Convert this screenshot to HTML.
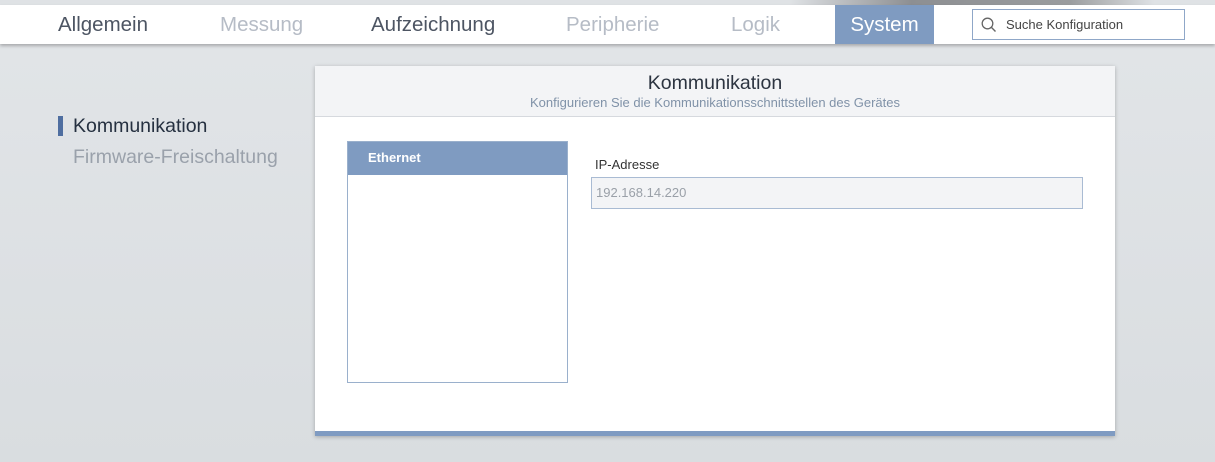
<!DOCTYPE html>
<html><head><meta charset="utf-8"><style>
*{margin:0;padding:0;box-sizing:border-box}
body{width:1215px;height:462px;overflow:hidden;background:linear-gradient(#e2e5e8,#d9dde0);font-family:"Liberation Sans",sans-serif;position:relative}
.top{position:absolute;left:0;top:0;width:1215px;height:5px;background:linear-gradient(90deg,#dfe2e5 0,#dfe2e5 65%,#8d8f92 75%,#9a9c9e 88%,#dfe2e5 95%)}
.nav{position:absolute;left:0;top:5px;width:1215px;height:39px;background:#fff;box-shadow:0 2px 3px rgba(0,0,0,.25)}
.nav span{position:absolute;top:0;height:39px;line-height:39px;font-size:20.5px;color:#4d5563;font-weight:300}
.nav .dim{color:#b6bcc6}
.sys{left:835px;width:99px;background:#7f9bc1;color:#fff!important;text-align:center}
.search{position:absolute;left:972px;top:4px;width:213px;height:31px;border:1px solid #8fa7c8;font-size:13px;color:#444;line-height:29px;padding-left:33px}
.side1{position:absolute;left:58px;top:116px;height:20px;border-left:5px solid #4f6ea0;padding-left:10px;font-size:19.5px;color:#253040;line-height:20px}
.side2{position:absolute;left:73px;top:146px;font-size:19.5px;color:#9aa1ab}
.card{position:absolute;left:315px;top:66px;width:800px;height:370px;background:#fff;box-shadow:0 1px 4px rgba(0,0,0,.25);border-bottom:5px solid #7f9bc2}
.hd{height:51px;background:#f3f4f6;border-bottom:1px solid #d6d9de;text-align:center}
.hd h1{font-weight:normal;font-size:19.5px;color:#2c3440;padding-top:6px;line-height:23px}
.hd p{font-size:13px;color:#8092a8;line-height:16px}
.list{position:absolute;left:32px;top:75px;width:221px;height:242px;border:1px solid #9ab0cc}
.list div{height:33px;background:#7f9bc1;color:#fff;font-size:13px;font-weight:bold;line-height:32px;padding-left:20px}
.lbl{position:absolute;left:280px;top:91px;font-size:13px;color:#333}
.inp{position:absolute;left:276px;top:111px;width:492px;height:32px;background:#f3f4f6;border:1px solid #a9bbd3;font-size:13px;color:#9aa0a8;line-height:30px;padding-left:4px}
</style></head><body>
<div class="top"></div>
<div class="nav">
<span style="left:58px">Allgemein</span>
<span class="dim" style="left:220px">Messung</span>
<span style="left:371px">Aufzeichnung</span>
<span class="dim" style="left:566px">Peripherie</span>
<span class="dim" style="left:731px">Logik</span>
<span class="sys">System</span>
<div class="search"><svg style="position:absolute;left:8px;top:7px" width="16" height="16" viewBox="0 0 16 16"><circle cx="6.5" cy="6.5" r="5.3" fill="none" stroke="#666" stroke-width="1.3"/><line x1="10.3" y1="10.3" x2="14.5" y2="14.5" stroke="#666" stroke-width="1.4"/></svg>Suche Konfiguration</div>
</div>
<div class="side1">Kommunikation</div>
<div class="side2">Firmware-Freischaltung</div>
<div class="card">
<div class="hd"><h1>Kommunikation</h1><p>Konfigurieren Sie die Kommunikationsschnittstellen des Gerätes</p></div>
<div class="list"><div>Ethernet</div></div>
<div class="lbl">IP-Adresse</div>
<div class="inp">192.168.14.220</div>
</div>
</body></html>
